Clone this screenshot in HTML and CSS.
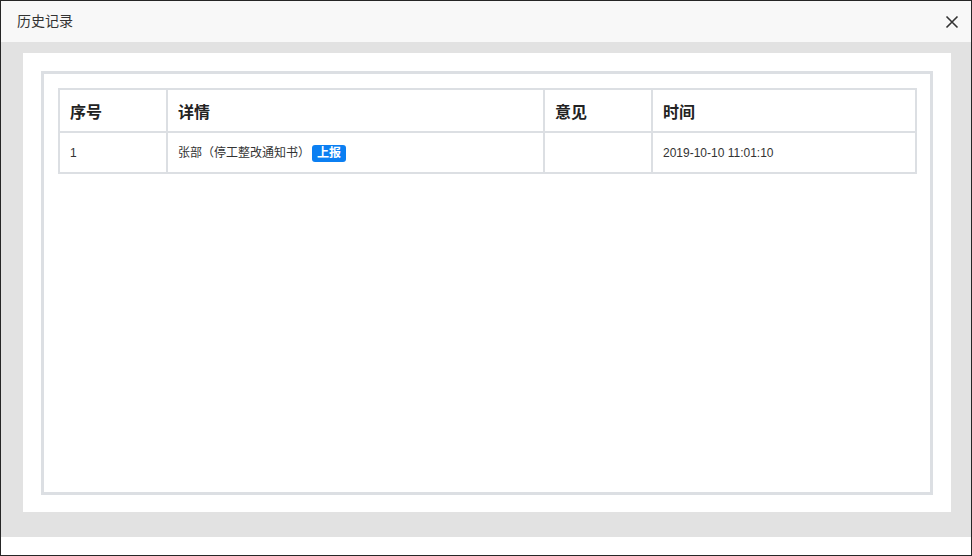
FILE: index.html
```html
<!DOCTYPE html>
<html lang="zh-CN">
<head>
    <meta charset="UTF-8">
    <title>历史记录</title>
    <link rel="stylesheet" href="styles.css">
</head>
<body>

    <div class="dialog">
        <div class="dialog-head">
            <span class="dialog-title">历史记录</span>
            <span class="dialog-close">
                <svg width="14" height="14" viewBox="0 0 14 14">
                    <path d="M1.5 1.5 L12.5 12.5 M12.5 1.5 L1.5 12.5" stroke="#333" stroke-width="1.6" fill="none"/>
                </svg>
            </span>
        </div>

        <div class="dialog-body">
            <div class="panel">
                <div class="panel-inner">
                    <table class="history">
                        <colgroup>
                            <col class="col-no">
                            <col class="col-detail">
                            <col class="col-opinion">
                            <col class="col-time">
                        </colgroup>
                        <thead>
                            <tr>
                                <th>序号</th>
                                <th>详情</th>
                                <th>意见</th>
                                <th>时间</th>
                            </tr>
                        </thead>
                        <tbody>
                            <tr>
                                <td>1</td>
                                <td>张部（停工整改通知书）<span class="tag">上报</span></td>
                                <td></td>
                                <td>2019-10-10 11:01:10</td>
                            </tr>
                        </tbody>
                    </table>
                </div>
            </div>
        </div>

        <div class="dialog-foot"></div>
    </div>

</body>
</html>
```

FILE: styles.css
```css
body {
    margin: 0;
    font-family: "Liberation Sans", "Noto Sans CJK SC", sans-serif;
    color: #333;
}
.dialog {
    width: 972px;
    height: 556px;
    box-sizing: border-box;
    border: 1px solid #262626;
    display: flex;
    flex-direction: column;
    background: #fff;
}
.dialog-head {
    height: 41px;
    box-sizing: border-box;
    flex: none;
    background: #f8f8f8;
    display: flex;
    align-items: center;
    justify-content: space-between;
    padding: 0 12px 3px 16px;
}
.dialog-title {
    font-size: 14px;
    color: #333;
    font-family: "Noto Sans CJK SC", sans-serif;
}
.dialog-close {
    display: flex;
    width: 14px;
    height: 14px;
    margin-top: 3px;
}
.dialog-body {
    background: #e2e2e2;
    padding: 11px 20px 25px 22px;
    flex: none;
}
.panel {
    background: #fff;
    height: 459px;
    box-sizing: border-box;
    padding: 18px 18px 17px 18px;
}
.panel-inner {
    height: 100%;
    box-sizing: border-box;
    border: 3px solid #dcdfe3;
    padding: 14px;
}
.dialog-foot {
    flex: 1;
}
.history {
    width: 857px;
    border-collapse: collapse;
    table-layout: fixed;
}
.col-no { width: 108px; }
.col-detail { width: 377px; }
.col-opinion { width: 108px; }
.col-time { width: 264px; }
.history th,
.history td {
    border: 2px solid #dcdfe3;
    text-align: left;
    padding: 0 10px;
    font-family: "Liberation Sans", "Noto Sans CJK SC", sans-serif;
}
.history th {
    height: 41px;
    font-size: 16px;
    font-weight: bold;
    color: #222;
}
.history td {
    height: 39px;
    font-size: 12px;
    color: #333;
}
.tag {
    display: inline-block;
    background: #0b7ff2;
    color: #fff;
    font-weight: bold;
    font-size: 12px;
    line-height: 17px;
    padding: 0 5px;
    border-radius: 3px;
    margin-left: 2px;
    vertical-align: middle;
}
```
